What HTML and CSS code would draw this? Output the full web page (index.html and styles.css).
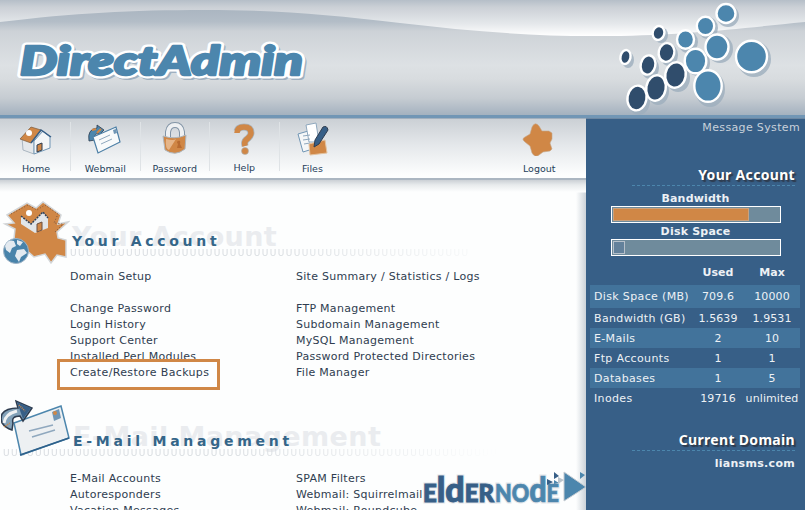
FILE: index.html
```html
<!DOCTYPE html>
<html lang="en">
<head>
<meta charset="utf-8">
<title>DirectAdmin</title>
<link rel="stylesheet" href="styles.css">
</head>
<body>
<div class="page">
<header class="banner">
<svg width="805" height="119" viewBox="0 0 805 119">
<defs>
<linearGradient id="base" x1="0" y1="0" x2="0" y2="1">
<stop offset="0" stop-color="#b5bec8"/><stop offset=".06" stop-color="#cbd0d6"/><stop offset=".2" stop-color="#e5e8eb"/><stop offset=".3" stop-color="#fff"/>
</linearGradient>
<linearGradient id="wave" gradientUnits="userSpaceOnUse" x1="0" y1="10" x2="0" y2="116">
<stop offset="0" stop-color="#abb6c1"/><stop offset=".11" stop-color="#b3bdc7"/><stop offset=".2" stop-color="#cdd2d7"/><stop offset=".52" stop-color="#dde1e4"/><stop offset=".65" stop-color="#d8dcdf"/><stop offset=".83" stop-color="#c6ccd2"/><stop offset="1" stop-color="#a2b0be"/>
</linearGradient>
</defs>
<rect width="805" height="119" fill="url(#base)"/>
<path d="M0 22C75 13 130 10 205 10S330 15 400 23S535 37 610 36S735 29 805 22V119H0Z" fill="url(#wave)"/>
<path d="M0 116.500H805" stroke="#7196b5" stroke-width="3"/>
<path d="M586 119H805" stroke="#375f87" stroke-width="1"/>
<text class="logo logo-shadow" x="22" y="77" textLength="283" lengthAdjust="spacingAndGlyphs">DirectAdmin</text>
<text class="logo logo-edge" x="20" y="74.500" textLength="283" lengthAdjust="spacingAndGlyphs">DirectAdmin</text>
<text class="logo" x="20" y="74.500" textLength="283" lengthAdjust="spacingAndGlyphs">DirectAdmin</text>
<g class="dots-shadow">
<ellipse cx="728" cy="16" rx="11" ry="11"/><ellipse cx="708" cy="28" rx="10" ry="11"/><ellipse cx="688" cy="42" rx="10" ry="11"/><ellipse cx="720" cy="49" rx="13" ry="14"/><ellipse cx="698" cy="63" rx="12" ry="13"/><ellipse cx="754" cy="59" rx="17" ry="18"/><ellipse cx="710" cy="89" rx="15" ry="18"/><ellipse cx="661" cy="35" rx="7" ry="8"/><ellipse cx="628" cy="60" rx="6" ry="8"/><ellipse cx="669" cy="55" rx="9" ry="11"/><ellipse cx="650" cy="68" rx="9" ry="11"/><ellipse cx="678" cy="78" rx="12" ry="14"/><ellipse cx="658" cy="91" rx="11" ry="14"/><ellipse cx="639" cy="101" rx="11" ry="14"/>
</g>
<g class="dots-light">
<ellipse cx="726" cy="13.500" rx="9.500" ry="9.500"/><ellipse cx="705.500" cy="26" rx="8.700" ry="9.200"/><ellipse cx="685.500" cy="39.500" rx="8.500" ry="9.300"/><ellipse cx="717" cy="47" rx="11.500" ry="12.500"/><ellipse cx="695.500" cy="61" rx="10.800" ry="12.300"/><ellipse cx="751.500" cy="56.500" rx="15.500" ry="15.800"/><ellipse cx="708" cy="86" rx="13.700" ry="15.800"/>
</g>
<g class="dots-dark">
<ellipse cx="658.500" cy="33" rx="5.800" ry="7" transform="rotate(15 658.500 33)"/><ellipse cx="625.500" cy="57" rx="5" ry="7" transform="rotate(12 625.500 57)"/><ellipse cx="666.500" cy="52.500" rx="7.800" ry="9.400" transform="rotate(12 666.500 52.500)"/><ellipse cx="648" cy="65" rx="7.300" ry="9.700" transform="rotate(12 648 65)"/><ellipse cx="675.500" cy="75" rx="10.200" ry="12.800" transform="rotate(10 675.500 75)"/><ellipse cx="656" cy="88" rx="9.700" ry="12.800" transform="rotate(10 656 88)"/><ellipse cx="637" cy="98" rx="9.500" ry="12.400" transform="rotate(10 637 98)"/>
</g>
</svg>
</header>
<div class="body">
<main class="main">
<nav class="nav">
<a class="item home"><svg width="34" height="34" viewBox="0 0 34 34"><path d="M3 15L15 20V32L4 28Z" fill="#e5e8eb" stroke="#abb6c1"/><path d="M15 19L24 9L31 15V26L15 32Z" fill="#f4f6f7" stroke="#7196b5"/><path d="M1 17L12 5L22 8L12 21Z" fill="#d08746" stroke="#7a5a3c" stroke-width=".7"/><path d="M12 21L22 8L32 15" fill="none" stroke="#375f87" stroke-width="1.500"/><circle cx="10" cy="11" r="3" fill="#fff"/><path d="M18 23L23 21V28L18 30Z" fill="#d08746" stroke="#2f3d50"/></svg><span>Home</span></a>
<a class="item web"><svg width="34" height="34" viewBox="0 0 34 34"><path d="M1 19Q-1 7 9 6V3L16 8L10 14V11Q6 12 7 18Z" fill="#4c86ad" stroke="#2f3d50" stroke-width=".8"/><path d="M4 8L8 7M9 11L13 7" stroke="#d08746" stroke-width="2"/><path d="M5 15L28 5L32 20L10 31Z" fill="#f8fafb" stroke="#4c7fa6" stroke-width="1.200"/><path d="M11 18L22 13M13 22L24 17" stroke="#8fa8be"/><path d="M25 8L28 7L29 11L26 12Z" fill="#7196b5"/></svg><span>Webmail</span></a>
<a class="item pass"><svg width="34" height="34" viewBox="0 0 34 34"><path d="M10 17V10Q11 3 17 3T24 10V17" fill="none" stroke="#8294a6" stroke-width="6"/><path d="M10 17V10Q11 3 17 3T24 10V17" fill="none" stroke="#eef0f2" stroke-width="4"/><path d="M5 14Q17 18 28 13L27 27Q17 35 7 28Z" fill="#d08746" stroke="#aeb6bd"/><path d="M8 17Q16 19 18 17L11 28Q7 27 8 17" fill="#e6b588"/><path d="M20 19Q23 18 22 22L24 26H19L20 22Q18 20 20 19" fill="#b86b31"/></svg><span>Password</span></a>
<a class="item help"><svg width="34" height="34" viewBox="0 0 34 34"><path d="M10 9Q11 5 17 5Q24 5 24 11Q24 14 19 18Q17 20 18 24" fill="none" stroke="#aab3ba" stroke-width="7"/><path d="M10 11Q10 5 17 5Q24 5 24 11Q24 14 19 18Q17 20 18 24" fill="none" stroke="#d08746" stroke-width="5.500"/><circle cx="18" cy="29" r="3.500" fill="#d08746" stroke="#aab3ba" stroke-width=".6"/></svg><span>Help</span></a>
<a class="item files"><svg width="34" height="34" viewBox="0 0 34 34"><path d="M2 12L19 7L23 25L7 30Z" fill="#f5f7f8" stroke="#7196b5"/><path d="M10 3L20 1L23 20L13 20Z" fill="#fff" stroke="#8fa8be"/><path d="M7 14L14 13M7 18L14 17M8 22L14 21" stroke="#8fa8be"/><path d="M13 22L29 18L31 31L14 33Z" fill="#d08746" stroke="#e3c29f"/><path d="M18 25L19 18L27 5Q31 3 32 8L23 22Z" fill="#375f87" stroke="#2f3d50"/></svg><span>Files</span></a>
<a class="item logout"><svg width="34" height="34" viewBox="0 0 34 34"><path d="M10 5Q13-1 17 4L20 9L27 9L30 11V17L28 21L30 27L28 29L21 30L17 33Q13 36 10 31L8 24L3 20Q-1 17 3 15L8 12Z" fill="#d08746" stroke="#c4a78b" stroke-width=".6"/></svg><span>Logout</span></a>
</nav>
<section class="section account">
<div class="head">
<svg class="art" width="68" height="66" viewBox="0 0 68 66"><path d="M5 15L25 3L34 8L41 2L59 15L56 24L66 22L55 32L56 38L64 40V57L55 55L49 63L43 54L32 57L12 39L13 29L3 24L12 23Z" fill="#d08746" stroke="#d2d5d7" stroke-width="1.500"/><path d="M9 14L26 5L35 10L43 5L56 14L52 23L61 24L53 32" fill="none" stroke="#785642" stroke-width="1" stroke-dasharray="1 2"/><path d="M19 16L29 24L41 12L46 18V28L33 33L19 24Z" fill="#e2e6e9"/><path d="M19 16L29 24L41 12L46 18" fill="none" stroke="#2f4057" stroke-width="1.500" stroke-dasharray="2 1"/><path d="M35 24L40 22V30L35 32Z" fill="#d08746" stroke="#6d5141"/><circle cx="27" cy="13" r="3" fill="#fff"/><circle cx="14" cy="51" r="12.500" fill="#4883aa" stroke="#9eb3c6"/><path d="M3 46Q6 39 12 41L14 46L10 48L8 53L4 50ZM15 40L21 42L18 46L15 44ZM15 50L22 49L25 53L19 57L17 62L13 56Z" fill="#e3eaf0"/></svg>
<div class="titles"><span class="ghost">Your Account</span><h2 class="ta">Your Account</h2><span class="chain">UUUUUUUUUUUUUUUUUUUUUUUUUUUUUUUUUUUUUUUUUUUUUUUUUU</span></div>
</div>
<div class="cols">
<ul><li>Domain Setup</li><li>&nbsp;</li><li>Change Password</li><li>Login History</li><li>Support Center</li><li>Installed Perl Modules</li><li class="marked">Create/Restore Backups</li></ul>
<ul><li>Site Summary / Statistics / Logs</li><li>&nbsp;</li><li>FTP Management</li><li>Subdomain Management</li><li>MySQL Management</li><li>Password Protected Directories</li><li>File Manager</li></ul>
</div>
</section>
<section class="section email">
<div class="head">
<svg class="art" width="70" height="60" viewBox="0 0 70 60"><path d="M13 26L60 9L68 41L20 58Z" fill="#edf0f2" stroke="#4c86ad" stroke-width="1.500"/><path d="M19 58L68 41" stroke="#2e618b" stroke-width="1.500"/><path d="M28 34L52 28M31 40L54 33" stroke="#8fa8be" stroke-width="1.500"/><path d="M51 15L58 12L60 21L53 24Z" fill="#7196b5"/><circle cx="54" cy="16" r="2" fill="#d08746"/><path d="M11 33Q-3 28 1 17Q5 11 17 11L15 4L31 11L22 24L19 19Q10 19 12 26Z" fill="#83a2b9" stroke="#2f3d50" stroke-width="1.500"/><path d="M3 26Q4 17 16 14" stroke="#f0f2f3" stroke-width="3" fill="none"/><path d="M16 5L30 11L22 22Z" fill="#375f87"/><path d="M18 8L24 14M3 30L9 26" stroke="#d08746" stroke-width="1.500" stroke-dasharray="1 1"/></svg>
<div class="titles"><span class="ghost">E-Mail Management</span><h2 class="tb">E-Mail Management</h2><span class="chain">UUUUUUUUUUUUUUUUUUUUUUUUUUUUUUUUUUUUUUUUUUUUUUUUUUUUUUUUUUUUUUU</span></div>
</div>
<div class="cols">
<ul><li>E-Mail Accounts</li><li>Autoresponders</li><li>Vacation Messages</li></ul>
<ul><li>SPAM Filters</li><li>Webmail: Squirrelmail</li><li>Webmail: Roundcube</li></ul>
</div>
</section>
</main>
<aside class="side">
<div class="msg">Message System</div>
<h3>Your Account</h3>
<div class="meter-name">Bandwidth</div>
<div class="meter"><i class="fill bw"></i></div>
<div class="meter-name second">Disk Space</div>
<div class="meter"><i class="fill ds"></i></div>
<table>
<thead><tr><th></th><th>Used</th><th>Max</th></tr></thead>
<tbody>
<tr class="tall"><td>Disk Space (MB)</td><td>709.6</td><td>10000</td></tr>
<tr><td>Bandwidth (GB)</td><td>1.5639</td><td>1.9531</td></tr>
<tr><td>E-Mails</td><td>2</td><td>10</td></tr>
<tr><td>Ftp Accounts</td><td>1</td><td>1</td></tr>
<tr><td>Databases</td><td>1</td><td>5</td></tr>
<tr><td>Inodes</td><td>19716</td><td>unlimited</td></tr>
</tbody>
</table>
<h3 class="domain">Current Domain</h3>
<div class="host">liansms.com</div>
</aside>
</div>
<svg class="brand" width="170" height="40" viewBox="0 0 170 40">
<g class="brand-halo"><text class="bt" x="3" y="31" textLength="71" lengthAdjust="spacingAndGlyphs">E<tspan class="big">ld</tspan>ER</text><text class="bt" x="75" y="31" textLength="64" lengthAdjust="spacingAndGlyphs">NO<tspan class="big">d</tspan>E</text></g>
<text class="bt dark" x="3" y="31" textLength="71" lengthAdjust="spacingAndGlyphs">E<tspan class="big">ld</tspan>ER</text>
<text class="bt light" x="75" y="31" textLength="64" lengthAdjust="spacingAndGlyphs">NO<tspan class="big">d</tspan>E</text>
<path d="M144 1L166 16L144 30Z" fill="#4c86ad" stroke="#c6ccd2"/>
<path d="M127 8L133 11L127 14ZM134 1L139 5L134 8Z" fill="#375f87"/><path d="M134 9L139 12L134 13ZM160 1L165 4L160 8Z" fill="#4c86ad"/><path d="M138 6L144 9L138 13Z" fill="#bcc5cd"/>
</svg>
</div>
</body>
</html>
```
FILE: styles.css
```css
*, *::before, *::after { box-sizing: border-box; }
body { margin: 0; font: 11px/16px "DejaVu Sans", sans-serif; color: #2f3d50; background: #fdfefe; }
.page { position: relative; width: 805px; height: 510px; overflow: hidden; }
.banner, .banner svg { display: block; height: 119px; }
.logo { font: italic 900 40px Lato, sans-serif; fill: #4c86ad; stroke: #4c86ad; stroke-width: 2.4px; stroke-linejoin: round; }
.logo-edge { fill: #fff; stroke: #fff; stroke-width: 7px; }
.logo-shadow { fill: #9fb0c0; stroke: #9fb0c0; stroke-width: 6px; }
.dots-shadow { fill: #9eafbe; opacity: .8; }
.dots-light { fill: #4c86ad; stroke: #fff; stroke-width: 2.4px; }
.dots-dark { fill: #304d6c; stroke: #fff; stroke-width: 2.4px; }
.body { display: flex; height: 391px; }
.main { width: 586px; overflow: hidden; background: linear-gradient(90deg, transparent 576px, #cbd2d9 586px); }
.nav { display: flex; height: 61px; padding: 3px 0 0; background: linear-gradient(#cbd0d5, #e5e8eb 45%, #fdfefe 95%); border-bottom: 2px solid #abb6c1; }
.item { display: flex; flex-direction: column; align-items: center; font-size: 9.5px; line-height: 12px; width: 69.5px; border-right: 1px solid #dfe3e6; height: 49px; color: #263e5a; }
.item svg { display: block; flex: none; }
.item span { margin-top: 7px; }
.home { width: 71px; padding-left: 2px; }
.help span { margin-top: 6px; }
.files { width: 66px; border: 0; }
.logout { margin-left: 159px; border: 0; }
.account { padding-top: 18px; height: 218px; background: linear-gradient(#cbd0d5, #e8ebed 5px, #fdfefe 12px, transparent 13px); }
.head { display: flex; height: 68px; }
.art { flex: none; margin-left: 2px; margin-top: 2px; position: relative; z-index: 1; }
.email .art { margin-top: -1px; margin-left: 1px; }
.titles { display: grid; flex: 1; position: relative; align-content: start; }
.titles > * { grid-area: 1 / 1; white-space: nowrap; }
.ghost { color: #eaecef; font: bold 27px/32px "DejaVu Sans", sans-serif; padding: 23px 0 0 2px; letter-spacing: .4px; }
h2 { margin: 0; padding-top: 33px; font: bold 14px/20px "DejaVu Sans", sans-serif; color: #356689; }
.ta { letter-spacing: 3.7px; padding-left: 2px; }
.tb { letter-spacing: 3.75px; padding-left: 2px; }
.chain { padding-top: 48px; overflow: hidden; color: #d8dce0; font-size: 9px; line-height: 14px; letter-spacing: 1.4px; -webkit-mask-image: linear-gradient(90deg, #000 40%, transparent 85%); mask-image: linear-gradient(90deg, #000 40%, transparent 85%); }
.email .chain { margin-left: -68px; }
.cols { display: grid; grid-template-columns: 226px 1fr; padding-left: 70px; }
ul { list-style: none; margin: 0; }
li { height: 16px; white-space: nowrap; letter-spacing: .28px; }
.account ul { padding: 3px 0 0; }
.marked { position: relative; letter-spacing: .35px; }
.marked::after { content: ""; position: absolute; left: -13px; top: -6px; width: 163px; height: 31px; border: 3px solid #d08746; }
.email ul { padding: 5px 0 0; }
.side { width: 219px; background: #375f87; color: #edf1f5; }
.msg { height: 18px; line-height: 17px; text-align: right; padding-right: 5px; letter-spacing: .35px; color: #c8d1da; }
h3 { margin: 28px 10px 0 46px; height: 21px; font: bold 14px/20px "Noto Sans", sans-serif; letter-spacing: .32px; text-align: right; color: #fff; text-shadow: 1px 1px 1px #2f3d50, 2px 2px 1px #2f3d50; border-bottom: 1px dashed #4c86ad; }
.meter-name { font-weight: bold; text-align: center; height: 20px; line-height: 25px; letter-spacing: .2px; }
.meter { width: 170px; height: 17px; margin-left: 25px; border: 1px solid #fff; background: #6f8b9c; padding: 1px; }
.meter-name.second { height: 16px; line-height: 17px; }
.fill { display: block; height: 13px; background: #d08746; border: 1px solid #c9a27f; }
.bw { width: 136px; }
.ds { width: 12px; background: #63819b; border-color: #b6c0ca; }
table { width: 210px; margin: 5px 0 0 4px; border-collapse: collapse; table-layout: fixed; }
th { height: 24px; padding: 0; }
th:nth-child(1) { width: 102px; }
th:nth-child(2) { width: 52px; }
td { height: 20px; padding: 1px 0 0; text-align: center; white-space: nowrap; line-height: 16px; letter-spacing: .1px; }
td:first-child { text-align: left; padding-left: 4px; letter-spacing: .35px; }
.tall td { height: 23px; padding-top: 0; }
tbody tr:nth-child(odd) { background: #42739b; }
.domain { margin-top: 22px; }
.host { font-weight: bold; text-align: right; padding: 5px 10px 0 0; letter-spacing: .3px; }
.brand { position: absolute; left: 420px; top: 471px; }
.bt { font: 900 24px Lato, sans-serif; }
.big { font-size: 34px; }
.dark { fill: #375f87; stroke: #375f87; }
.light { fill: #4c86ad; stroke: #4c86ad; stroke-width: .7px; }
.brand-halo { fill: #fff; stroke: #e5e8eb; stroke-width: 3px; }
```
